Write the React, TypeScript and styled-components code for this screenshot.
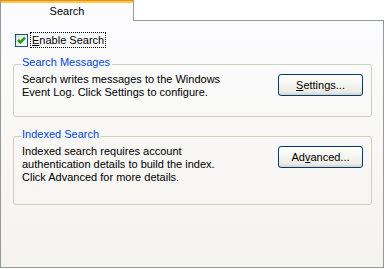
import React from "react";
import styled, { createGlobalStyle } from "styled-components";

const Global = createGlobalStyle`
  html, body { margin: 0; padding: 0; background: #ffffff; }
  body { font-family: "Liberation Sans", Arial, sans-serif; font-size: 11px; color: #000; }
`;

const Window = styled.div`
  width: 385px;
  height: 269px;
  display: flex;
  flex-direction: column;
  background: #ffffff;
  box-sizing: border-box;
`;

const TabStrip = styled.div`
  display: flex;
  height: 21px;
  position: relative;
  z-index: 1;
`;

const Tab = styled.div`
  width: 134px;
  height: 21px;
  box-sizing: border-box;
  border-left: 1px solid #919b9c;
  border-right: 1px solid #919b9c;
  border-top: 1px solid #e68b2c;
  box-shadow: inset 0 1px 0 #ffc83c, inset 0 2px 0 #ffc83c;
  background: #fcfcfe;
  padding-top: 4px;
  text-align: center;
  line-height: 13px;
`;

const Panel = styled.div`
  width: 384px;
  height: 248px;
  margin-top: -1px;
  box-sizing: border-box;
  border: 1px solid #919b9c;
  background: linear-gradient(#fcfcfe, #f4f3ee);
  display: flex;
  flex-direction: column;
  padding: 11px 11px 0 12px;
`;

const CheckRow = styled.label`
  display: flex;
  align-items: center;
  height: 16px;
  margin-left: 2px;
  gap: 2px;
`;

const CheckBox = styled.span`
  width: 13px;
  height: 13px;
  box-sizing: border-box;
  border: 1px solid #1c5180;
  background: linear-gradient(135deg, #dcdcd7, #ffffff);
  display: flex;
  align-items: center;
  justify-content: center;
`;

const FocusLabel = styled.span`
  border: 1px dotted #000;
  padding: 0 1px 0 1px;
  line-height: 14px;
`;

const Mnemonic = styled.span`
  text-decoration: underline;
  text-underline-offset: 1px;
`;

const Group = styled.fieldset<{ $bottom: number; $top: number }>`
  margin: ${(p) => p.$top}px 0 0 0;
  width: 359px;
  box-sizing: border-box;
  border: 1px solid #d0d0bf;
  border-radius: 3px;
  padding: 1px 8px ${(p) => p.$bottom}px 8px;
  min-width: 0;
`;

const Legend = styled.legend`
  color: #0046d5;
  line-height: 13px;
  padding: 0 2px 3px 1px;
  margin-left: -1px;
`;

const GroupRow = styled.div`
  display: flex;
  justify-content: space-between;
  align-items: flex-start;
`;

const Description = styled.p`
  margin: 0;
  line-height: 13px;
`;

const Button = styled.button`
  width: 85px;
  height: 22px;
  margin-top: 1px;
  box-sizing: border-box;
  border: 1px solid #003c74;
  border-radius: 3px;
  background: linear-gradient(#ffffff 0%, #f4f4f0 50%, #ecebe6 85%, #d6d0c5 100%);
  font-family: "Liberation Sans", Arial, sans-serif;
  font-size: 11px;
  color: #000;
  padding: 0;
  line-height: 13px;
`;

export default function App() {
  return (
    <>
      <Global />
      <Window>
        <TabStrip>
          <Tab>Search</Tab>
        </TabStrip>
        <Panel>
          <CheckRow>
            <CheckBox>
              <svg width="11" height="11" viewBox="0 0 11 11">
                <path d="M2 4.8 L4.4 7.3 L9 2.6" fill="none" stroke="#21a121" strokeWidth="2.6" />
              </svg>
            </CheckBox>
            <FocusLabel>
              <Mnemonic>E</Mnemonic>nable Search
            </FocusLabel>
          </CheckRow>
          <Group $top={8} $bottom={17}>
            <Legend>Search Messages</Legend>
            <GroupRow>
              <Description>
                Search writes messages to the Windows
                <br />
                Event Log. Click Settings to configure.
              </Description>
              <Button>
                <Mnemonic>S</Mnemonic>ettings...
              </Button>
            </GroupRow>
          </Group>
          <Group $top={11} $bottom={20}>
            <Legend>Indexed Search</Legend>
            <GroupRow>
              <Description>
                Indexed search requires account
                <br />
                authentication details to build the index.
                <br />
                Click Advanced for more details.
              </Description>
              <Button>
                Ad<Mnemonic>v</Mnemonic>anced...
              </Button>
            </GroupRow>
          </Group>
        </Panel>
      </Window>
    </>
  );
}
